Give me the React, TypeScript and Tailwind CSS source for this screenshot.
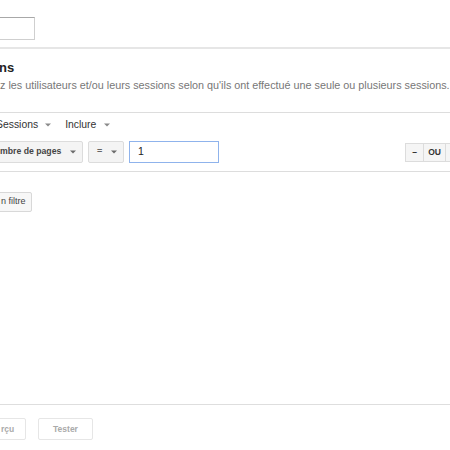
import React from 'react';

const Caret: React.FC<{ className?: string; color?: string }> = ({ className, color = '#6b6b6b' }) => (
    <svg width="6" height="4" viewBox="0 0 6 4" className={className}>
        <path d="M0 0.5 L6 0.5 L3 3.5 Z" fill={color} />
    </svg>
);

const App: React.FC = () => {
    return (
        <div
            className="w-[450px] h-[450px] overflow-hidden bg-white flex flex-col"
            style={{ fontFamily: '"Liberation Sans", Arial, sans-serif' }}
        >
            {/* Name input (cut on the left) */}
            <div className="pt-[17px]">
                <div className="-ml-[2px] w-[37px] h-[23px] border border-[#cfcfcf] border-t-[#a8a8a8] bg-white" />
            </div>

            <div className="mt-[7px] h-[2px] bg-[#e6e6e6]" />

            {/* Section heading */}
            <div className="mt-[10px] text-[13px] leading-[18px] font-bold text-[#222] whitespace-nowrap -ml-[1px]">ns</div>
            <div className="text-[10.8px] leading-[16px] text-[#777] whitespace-nowrap">
                z les utilisateurs et/ou leurs sessions selon qu'ils ont effectué une seule ou plusieurs sessions.
            </div>

            <div className="mt-[19px] h-px bg-[#dddddd]" />

            {/* Scope selectors */}
            <div className="mt-[4px] h-[16px] flex items-center text-[10.4px] text-[#333] whitespace-nowrap -ml-[4px]">
                <span>Sessions</span>
                <Caret className="ml-[7px]" color="#8a8a8a" />
                <span className="ml-[14px]">Inclure</span>
                <Caret className="ml-[8px]" color="#8a8a8a" />
            </div>

            {/* Condition row */}
            <div className="mt-[8px] h-[22px] flex items-stretch">
                <div className="-ml-[4px] w-[87px] flex items-center justify-between pl-[3px] pr-[6px] bg-[#f4f4f4] border border-[#dcdcdc] rounded-[2px] text-[8.7px] font-bold text-[#444] whitespace-nowrap">
                    <span>mbre de pages</span>
                    <Caret />
                </div>
                <div className="ml-[5px] w-[36px] flex items-center justify-between pl-[8px] pr-[6px] bg-[#f4f4f4] border border-[#dcdcdc] rounded-[2px] text-[9px] font-bold text-[#666]">
                    <span>=</span>
                    <Caret />
                </div>
                <div className="ml-[5px] w-[90px] flex items-center pl-[8px] border border-[#8fb3ec] text-[10.5px] text-[#222]">
                    1
                </div>
                <div className="ml-auto self-center -mr-[18px] flex h-[19px] text-[8.5px] font-bold text-[#333]">
                    <div className="w-[19px] flex items-center justify-center bg-[#f5f5f5] border border-[#dcdcdc]">–</div>
                    <div className="w-[22px] flex items-center justify-center bg-[#f5f5f5] border border-l-0 border-[#dcdcdc]">OU</div>
                    <div className="w-[22px] flex items-center justify-center bg-[#f5f5f5] border border-l-0 border-[#dcdcdc]">ET</div>
                </div>
            </div>

            <div className="mt-[8px] h-px bg-[#dddddd]" />

            {/* Add filter */}
            <div className="mt-[20px] flex">
                <div className="-ml-[2px] h-[20px] pl-[2px] pr-[5px] flex items-center bg-[#f7f7f7] border border-[#d8d8d8] rounded-[2px] text-[9px] text-[#444] whitespace-nowrap">
                    n filtre
                </div>
            </div>

            <div className="flex-1" />

            {/* Footer actions */}
            <div className="border-t border-[#dedede] pt-[13px] pb-[10px] flex gap-[12px]">
                <div className="-ml-[2px] w-[28px] h-[22px] flex items-center pl-[2px] border border-[#e6e6e6] rounded-[2px] text-[8.5px] font-bold text-[#aaa] whitespace-nowrap">
                    rçu
                </div>
                <div className="w-[55px] h-[22px] flex items-center justify-center border border-[#e6e6e6] rounded-[2px] text-[8.5px] font-bold text-[#aaa]">
                    Tester
                </div>
            </div>
        </div>
    );
};

export default App;
